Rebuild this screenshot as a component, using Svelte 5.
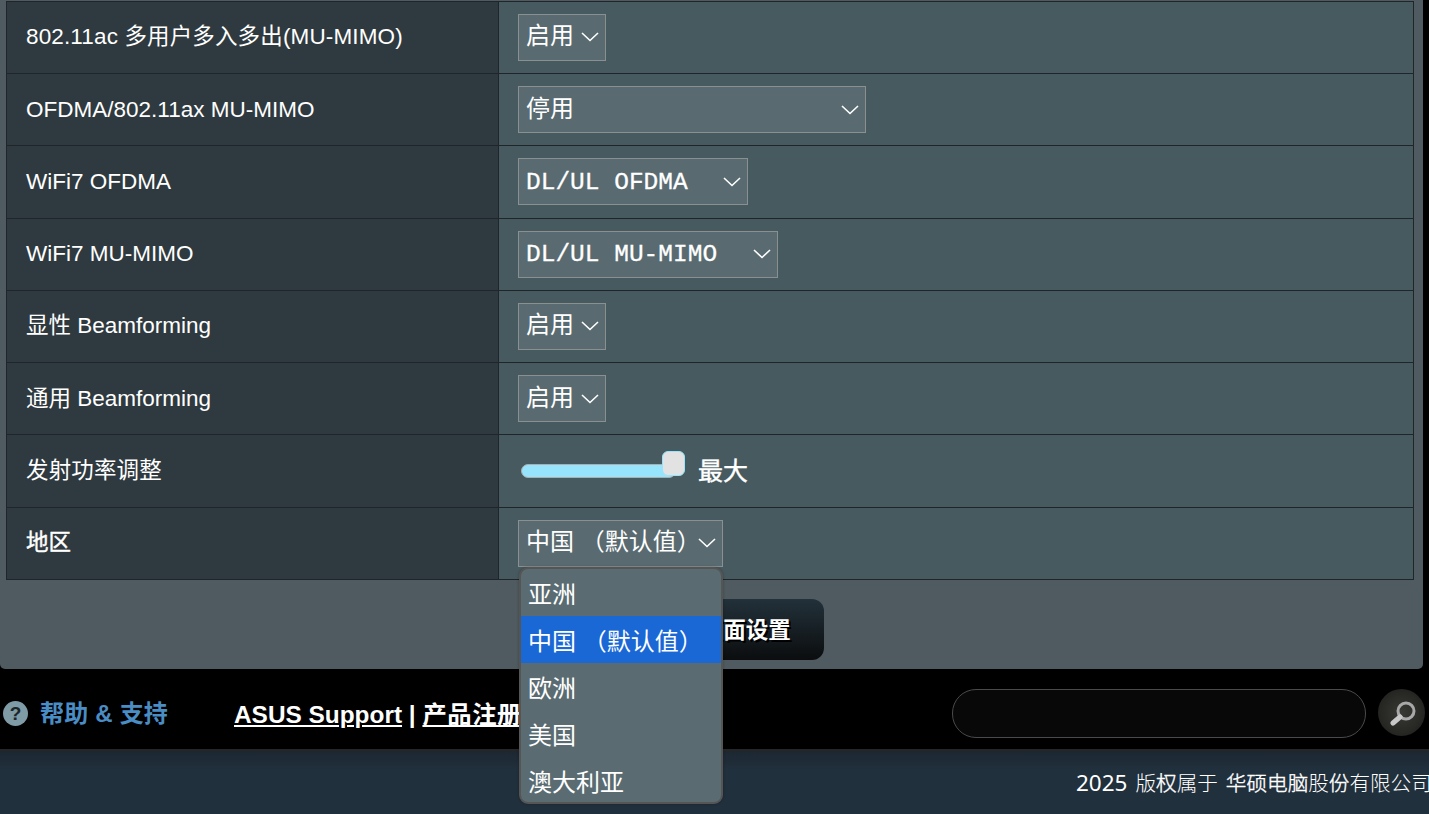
<script>
	const rows = [
		{ label: '802.11ac 多用户多入多出(MU-MIMO)', value: '启用', width: 88, spaced: true },
		{ label: 'OFDMA/802.11ax MU-MIMO', value: '停用', width: 348 },
		{ label: 'WiFi7 OFDMA', value: 'DL/UL OFDMA', width: 230, mono: true },
		{ label: 'WiFi7 MU-MIMO', value: 'DL/UL MU-MIMO', width: 260, mono: true },
		{ label: '显性 Beamforming', value: '启用', width: 88 },
		{ label: '通用 Beamforming', value: '启用', width: 88 },
		{ label: '发射功率调整', slider: true, spaced: true },
		{ label: '地区', value: '中国 （默认值）', width: 205, region: true }
	];
	const regions = ['亚洲', '中国 （默认值）', '欧洲', '美国', '澳大利亚'];
</script>

<div class="page">
	<main class="panel">
		<div class="table">
			{#each rows as row}
				<div class="row">
					<div class="label" class:heavy={row.region} class:spaced={row.spaced}>{row.label}</div>
					<div class="field">
						{#if row.slider}
							<div class="slider">
								<div class="track"></div>
								<div class="thumb"></div>
							</div>
							<span class="slider-value">最大</span>
						{:else}
							<div class="select" class:mono={row.mono} style="width: {row.width}px">
								<span>{row.value}</span>
								<svg class="chevron" width="18" height="10" viewBox="0 0 18 10">
									<path d="M1 1 L9 8.5 L17 1" fill="none" stroke="#fff" stroke-width="1.6" />
								</svg>
							</div>
						{/if}
						{#if row.region}
							<ul class="dropdown">
								{#each regions as region, i}
									<li class:active={i === 1}>{region}</li>
								{/each}
							</ul>
						{/if}
					</div>
				</div>
			{/each}
		</div>
		<div class="actions">
			<button class="apply">应用本页面设置</button>
		</div>
	</main>

	<div class="support">
		<div class="help">
			<span class="help-icon">?</span>
			<span class="help-text">帮助 &amp; 支持</span>
		</div>
		<div class="links"><u>ASUS Support</u> | <u class="cjk-link">产品注册</u></div>
		<div class="search">
			<div class="search-box"></div>
			<div class="search-btn">
				<svg width="30" height="30" viewBox="0 0 30 30">
					<circle cx="19" cy="13" r="8" fill="none" stroke="#a8a8a8" stroke-width="3" />
					<path d="M13 19 L6 25" stroke="#c8c8c8" stroke-width="5" stroke-linecap="round" />
				</svg>
			</div>
		</div>
	</div>

	<footer class="copyright">
		<span class="year">2025</span>
		<span class="thin">版<b>权</b>属于</span>
		<span class="thin"><b>华硕电脑</b>股<b>份</b>有限公司</span>
	</footer>
</div>

<style>
	:global(body) {
		margin: 0;
		background: #000;
		overflow: hidden;
	}
	.page {
		width: 1429px;
		height: 814px;
		overflow: hidden;
		display: flex;
		flex-direction: column;
		background: #000;
		color: #fff;
		font-family: "Liberation Sans", "Noto Sans CJK SC", sans-serif;
	}
	.panel {
		width: 1423px;
		height: 669px;
		flex: none;
		box-sizing: border-box;
		padding: 0.75px 9px 0 6px;
		background: #4f5b60;
		border-radius: 0 0 5px 5px;
	}
	.table {
		border: 1px solid #1f2529;
	}
	.row {
		display: grid;
		grid-template-columns: 492px 1fr;
		height: 72.25px;
		box-sizing: border-box;
		border-bottom: 1px solid #1f2529;
	}
	.row:last-child {
		border-bottom: none;
		height: 71.5px;
	}
	.label {
		display: flex;
		align-items: center;
		padding-left: 19px;
		background: #2f3a40;
		border-right: 1px solid #1f2529;
		font-size: 22.5px;
		line-height: 26px;
	}
	.label.spaced {
		letter-spacing: 0.14px;
	}
	.label.heavy {
		-webkit-text-stroke: 0.4px #fff;
	}
	.field {
		position: relative;
		display: flex;
		align-items: center;
		padding-left: 19px;
		background: #475a60;
	}
	.select {
		display: flex;
		align-items: center;
		justify-content: space-between;
		box-sizing: border-box;
		height: 47px;
		padding: 0 6px 2px 7px;
		background: #596b71;
		border: 1px solid #89908f;
		font-size: 24px;
		line-height: 28px;
	}
	.select.mono {
		padding-top: 2px;
		padding-bottom: 0;
		font-family: "Liberation Mono", monospace;
		font-size: 24.5px;
		-webkit-text-stroke: 0.3px #fff;
	}
	.select.mono .chevron {
		margin-top: -2px;
	}
	.chevron {
		flex: none;
		margin-top: 2px;
	}
	.slider {
		position: relative;
		width: 167px;
		height: 26px;
	}
	.track {
		position: absolute;
		left: 3px;
		top: 6px;
		width: 155px;
		height: 14px;
		box-sizing: border-box;
		border-radius: 7px;
		background: #96e5fd;
		border: 1px solid #a8b0b2;
	}
	.thumb {
		position: absolute;
		left: 144px;
		top: -7px;
		width: 23px;
		height: 25px;
		border-radius: 6px;
		background: #e2e2e2;
		border: 1px solid #96e5fd;
		box-sizing: border-box;
	}
	.slider-value {
		margin-left: 13px;
		font-size: 25px;
		line-height: 28px;
		-webkit-text-stroke: 0.4px #fff;
	}
	.dropdown {
		position: absolute;
		left: 20px;
		top: 59px;
		z-index: 2;
		width: 204px;
		height: 237px;
		box-sizing: border-box;
		margin: 0;
		padding: 0;
		list-style: none;
		background: #5a6c72;
		border: 2px solid #555;
		border-radius: 9px;
		box-shadow: 0 0 3px rgba(0, 0, 0, 0.25);
		font-size: 24px;
		line-height: 28px;
		overflow: hidden;
	}
	.dropdown li {
		display: flex;
		align-items: center;
		height: 47px;
		box-sizing: border-box;
		padding: 6px 0 0 7px;
	}
	.dropdown li.active {
		background: #1a67d6;
	}
	.actions {
		display: flex;
		justify-content: center;
		padding-top: 19px;
	}
	.apply {
		width: 226px;
		height: 61px;
		margin-left: 2px;
		padding: 3px 0 0 2px;
		border: none;
		border-radius: 12px;
		background: linear-gradient(#22313a, #0b0d0e);
		color: #fff;
		font-family: inherit;
		font-size: 22.5px;
		font-weight: 700;
		line-height: 28px;
		text-shadow: 2px 2px 0 #000;
	}
	.support {
		height: 82px;
		flex: none;
		box-sizing: border-box;
		display: flex;
		align-items: center;
		padding-top: 9px;
		background: #000;
		border-bottom: 2px solid #262626;
	}
	.help {
		display: flex;
		align-items: center;
		width: 234px;
		flex: none;
		padding-left: 3px;
		box-sizing: border-box;
	}
	.help-icon {
		width: 25px;
		height: 25px;
		border-radius: 50%;
		background: #7e9ba6;
		color: #1d2529;
		font-size: 19px;
		font-weight: 700;
		text-align: center;
		line-height: 25px;
	}
	.help-text {
		margin-left: 12px;
		color: #4a8cc4;
		font-size: 24px;
		font-weight: 700;
		line-height: 28px;
		letter-spacing: 0.2px;
	}
	.links {
		font-size: 24.4px;
		font-weight: 700;
		line-height: 28px;
		width: 718px;
		flex: none;
		padding-top: 3px;
		box-sizing: border-box;
	}
	.cjk-link {
		letter-spacing: 0.5px;
	}
	.search {
		display: flex;
		align-items: center;
		gap: 12px;
	}
	.search-box {
		width: 412px;
		height: 47px;
		border: 1px solid #4a4a4a;
		border-radius: 24px;
		background: #080808;
	}
	.search-btn {
		width: 47px;
		height: 47px;
		margin-top: -2px;
		display: flex;
		align-items: center;
		justify-content: center;
		border-radius: 50%;
		background: radial-gradient(#383834, #1c1c1a);
	}
	.search-btn svg {
		filter: blur(0.5px);
	}
	.copyright {
		flex: 1;
		display: flex;
		align-items: baseline;
		padding: 17px 0 0 1076px;
		white-space: nowrap;
		background: linear-gradient(#1c2731, #21303d 30%);
		font-family: "Noto Sans", "Noto Sans CJK SC", sans-serif;
		font-size: 22.5px;
		line-height: 30px;
	}
	.thin {
		margin-left: 8px;
		font-size: 20.6px;
		font-weight: 300;
	}
	.thin b {
		font-weight: 300;
		-webkit-text-stroke: 0.4px #fff;
	}
</style>
